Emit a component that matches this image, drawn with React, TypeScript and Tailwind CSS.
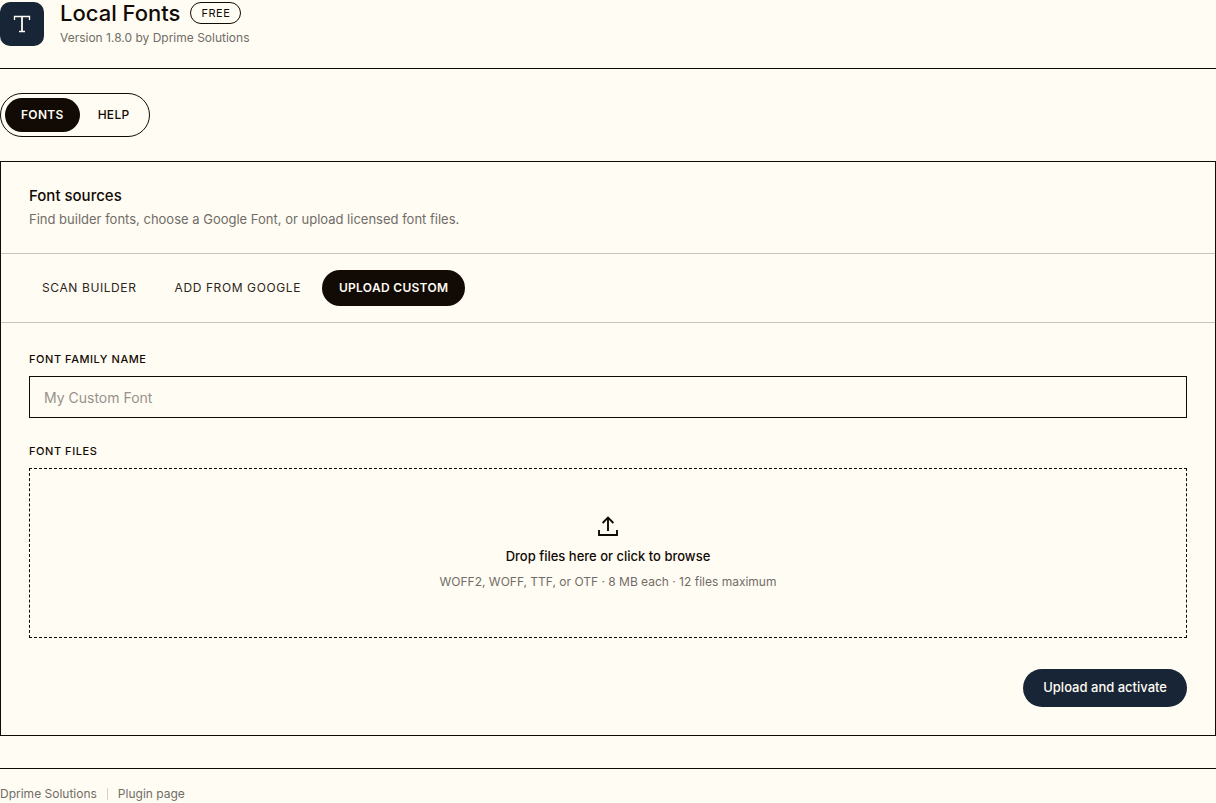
import { useState } from "react";

const pages = ["Fonts", "Help"];

const sources = ["Scan builder", "Add from Google", "Upload custom"];

function LogoMark() {
  return (
    <div className="flex size-11 shrink-0 items-center justify-center rounded-[10px] bg-[#182536]">
      <svg
        width="18"
        height="18"
        viewBox="0 0 18 18"
        fill="none"
        stroke="#fffcf3"
        aria-hidden="true"
      >
        <path d="M1.5 5V1.5h15V5M6 16.5h6" strokeWidth="1.3" />
        <path d="M9 1.5v15" strokeWidth="1.8" />
      </svg>
    </div>
  );
}

function UploadIcon() {
  return (
    <svg
      width="24"
      height="24"
      viewBox="0 0 24 24"
      fill="none"
      stroke="currentColor"
      strokeWidth="1.9"
      aria-hidden="true"
    >
      <path d="M12 17V3.5M6.6 9L12 3.5 17.4 9M3 16v5h18v-5" />
    </svg>
  );
}

export default function App() {
  const [page, setPage] = useState("Fonts");
  const [source, setSource] = useState("Upload custom");

  return (
    <div className="min-h-screen bg-[#fffcf3] font-['Inter','Liberation_Sans',sans-serif] text-[#120a04]">
      {/* Header */}
      <header className="flex items-center gap-4 border-b border-[#120a04] pb-5">
        <LogoMark />
        <div>
          <div className="flex items-center gap-2.5">
            <h1 className="text-[22px] leading-[26px] font-medium">
              Local Fonts
            </h1>
            <span className="rounded-full border border-[#120a04] px-2.5 text-[11px] leading-5 tracking-wider uppercase">
              Free
            </span>
          </div>
          <p className="mt-0.5 text-xs leading-5 text-[#716c68]">
            Version 1.8.0 by Dprime Solutions
          </p>
        </div>
      </header>

      {/* Page switcher */}
      <nav className="mt-6 inline-flex gap-0.5 rounded-full border border-[#120a04] p-1">
        {pages.map((name) => (
          <button
            key={name}
            type="button"
            onClick={() => setPage(name)}
            className={`h-[34px] rounded-full px-4 text-xs tracking-wide uppercase ${
              page === name
                ? "bg-[#120a04] font-semibold text-[#fffcf3]"
                : "font-medium"
            }`}
          >
            {name}
          </button>
        ))}
      </nav>

      <main className="mt-6 border border-[#120a04]">
        <div className="border-b border-[#c8c4be] px-7 pt-6 pb-6">
          <h2 className="text-[15px] leading-5 font-medium">Font sources</h2>
          <p className="mt-[3px] text-[13px] leading-5 text-[#716c68]">
            Find builder fonts, choose a Google Font, or upload licensed font
            files.
          </p>
        </div>

        {/* Source tabs */}
        <div className="flex gap-1 border-b border-[#c8c4be] px-6 py-4">
          {sources.map((name) => (
            <button
              key={name}
              type="button"
              onClick={() => setSource(name)}
              className={`h-9 rounded-full px-[17px] text-xs uppercase ${
                source === name
                  ? "bg-[#120a04] font-semibold tracking-wide text-[#fffcf3]"
                  : "tracking-wider text-[#2c2520]"
              }`}
            >
              {name}
            </button>
          ))}
        </div>

        <form
          className="flex flex-col p-7"
          onSubmit={(e) => e.preventDefault()}
        >
          <label
            htmlFor="family"
            className="text-[11px] leading-[17px] font-medium tracking-wider uppercase"
          >
            Font family name
          </label>
          <input
            id="family"
            type="text"
            placeholder="My Custom Font"
            className="mt-2 h-[42px] w-full border border-[#120a04] bg-transparent px-3.5 text-sm placeholder:text-[#97928c]"
          />

          <span className="mt-[25px] text-[11px] leading-[17px] font-medium tracking-wider uppercase">
            Font files
          </span>
          <label
            htmlFor="files"
            className="mt-2 flex min-h-[170px] cursor-pointer flex-col items-center justify-center border border-dashed border-[#120a04] px-4 text-center"
          >
            <UploadIcon />
            <span className="mt-2 text-[13px] leading-5 font-medium">
              Drop files here or click to browse
            </span>
            <span className="mt-1.5 text-xs leading-5 text-[#716c68]">
              WOFF2, WOFF, TTF, or OTF · 8 MB each · 12 files maximum
            </span>
            <input
              id="files"
              type="file"
              multiple
              accept=".woff2,.woff,.ttf,.otf"
              className="sr-only"
            />
          </label>

          <button
            type="submit"
            className="mt-[31px] h-[38px] self-end rounded-full bg-[#182536] px-5 text-[13px] font-medium text-[#fffcf3]"
          >
            Upload and activate
          </button>
        </form>
      </main>

      {/* Footer */}
      <footer className="mt-8 flex items-center border-t border-[#120a04] pt-4 text-xs leading-[18px] text-[#716c68]">
        <a href="#solutions">Dprime Solutions</a>
        <span className="mx-2.5 h-3 w-px bg-[#d6d2cb]" />
        <a href="#plugin">Plugin page</a>
      </footer>
    </div>
  );
}
